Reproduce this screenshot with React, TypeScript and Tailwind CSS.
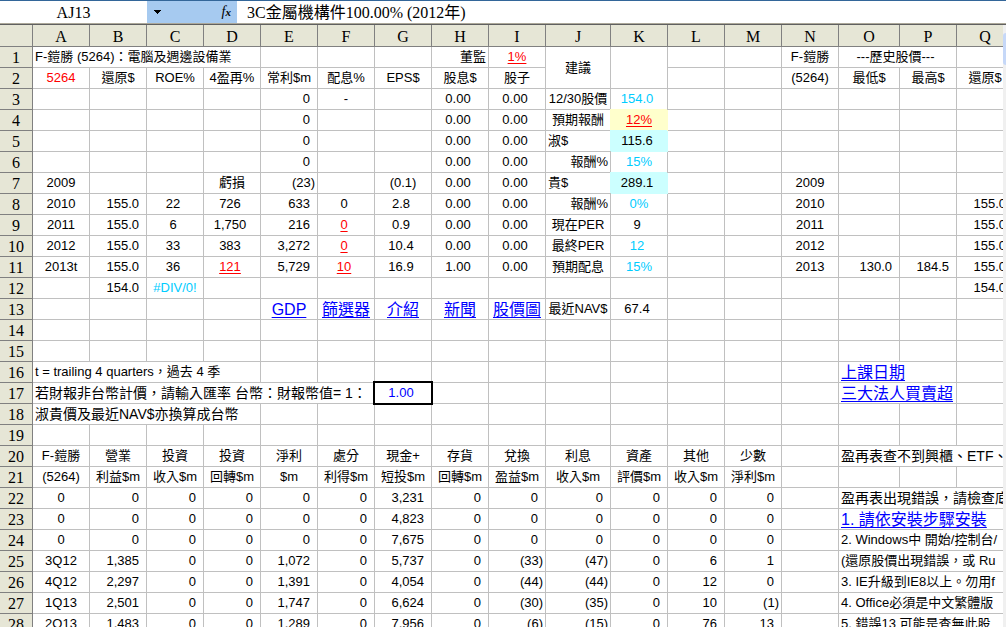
import { useState } from "react";
import clsx from "clsx";

// =============================================
// Types
// =============================================

type Cell = {
  text: string;
  align: string;
  style?: string; // colour / fill / size classes
  span?: number; // merged columns
  rows?: number; // merged rows
  link?: boolean;
  input?: boolean;
};

type Row = Record<string, Cell>;

// =============================================
// Cell helpers
// =============================================

const left = (text: string, span = 1): Cell => ({ text, align: "text-left pl-0.5", span });
const mid = (text: string, style = ""): Cell => ({ text, align: "text-center", style });
// centred number, leaves room for a closing bracket
const num = (text: string, style = ""): Cell => ({ text, align: "text-center pr-1", style });
// right aligned number, bracketed negatives sit closer to the edge
const right = (text: string): Cell => ({
  text,
  align: text.endsWith(")") ? "text-right pr-0.5" : "text-right pr-[7px]",
});
const end = (text: string): Cell => ({ text, align: "text-right pr-0.5" });
const link = (text: string): Cell => ({ text, align: "text-center", link: true });
const note = (text: string, span: number): Cell => ({ ...left(text, span), style: "text-sm/5" });

const RED = "text-[#ff0000]";
const RED_LINE = "text-[#ff0000] underline underline-offset-2";
const SKY = "text-[#00ccff]";
const YELLOW_FILL = "bg-[#ffffcc] border-[#ffffcc] shadow-[-1px_-1px_0_#ffffcc]";
const CYAN_FILL = "bg-[#ccffff] border-[#ccffff] shadow-[-1px_-1px_0_#ccffff]";

// =============================================
// Data
// =============================================

const columns = "ABCDEFGHIJKLMNOPQ".split("");

const columnWidth: Record<string, string> = {
  J: "w-[65px]",
  O: "w-[61px]",
  Q: "w-auto",
};

const dividends = { H: num("0.00"), I: num("0.00") };

// 20 - 21 headings, 22 - 28 quarters
const headings = (labels: string[]): Row =>
  Object.fromEntries(labels.map((label, i) => [columns[i], mid(label)]));

const quarter = (values: string[], comment: Cell): Row => ({
  ...Object.fromEntries(values.map((v, i) => [columns[i], i === 0 ? mid(v) : right(v)])),
  O: comment,
});

const sheet: Record<number, Row> = {
  1: {
    A: left("F-鎧勝 (5264)：電腦及週邊設備業", 4),
    H: end("董監"),
    I: mid("1%", RED_LINE),
    J: { ...mid("建議"), rows: 2 },
    K: { ...mid(""), rows: 2 },
    N: mid("F-鎧勝"),
    O: { ...num("---歷史股價---"), span: 2 },
  },
  2: {
    A: mid("5264", RED),
    B: mid("還原$"),
    C: mid("ROE%"),
    D: mid("4盈再%"),
    E: mid("常利$m"),
    F: mid("配息%"),
    G: mid("EPS$"),
    H: mid("股息$"),
    I: mid("股子"),
    N: mid("(5264)"),
    O: mid("最低$"),
    P: mid("最高$"),
    Q: mid("還原$"),
  },
  3: { E: right("0"), F: mid("-"), ...dividends, J: mid("12/30股價"), K: num("154.0", SKY) },
  4: { E: right("0"), ...dividends, J: mid("預期報酬"), K: mid("12%", clsx(RED_LINE, YELLOW_FILL)) },
  5: { E: right("0"), ...dividends, J: left("淑$"), K: num("115.6", CYAN_FILL) },
  6: { E: right("0"), ...dividends, J: end("報酬%"), K: mid("15%", SKY) },
  7: {
    A: mid("2009"),
    D: mid("虧損"),
    E: right("(23)"),
    G: mid("(0.1)"),
    ...dividends,
    J: left("貴$"),
    K: num("289.1", CYAN_FILL),
    N: mid("2009"),
  },
  8: {
    A: mid("2010"),
    B: right("155.0"),
    C: num("22"),
    D: num("726"),
    E: right("633"),
    F: num("0"),
    G: num("2.8"),
    ...dividends,
    J: end("報酬%"),
    K: mid("0%", SKY),
    N: mid("2010"),
    Q: right("155.0"),
  },
  9: {
    A: mid("2011"),
    B: right("155.0"),
    C: num("6"),
    D: num("1,750"),
    E: right("216"),
    F: num("0", RED_LINE),
    G: num("0.9"),
    ...dividends,
    J: mid("現在PER"),
    K: num("9"),
    N: mid("2011"),
    Q: right("155.0"),
  },
  10: {
    A: mid("2012"),
    B: right("155.0"),
    C: num("33"),
    D: num("383"),
    E: right("3,272"),
    F: num("0", RED_LINE),
    G: num("10.4"),
    ...dividends,
    J: mid("最終PER"),
    K: num("12", SKY),
    N: mid("2012"),
    Q: right("155.0"),
  },
  11: {
    A: mid("2013t"),
    B: right("155.0"),
    C: num("36"),
    D: num("121", RED_LINE),
    E: right("5,729"),
    F: num("10", RED_LINE),
    G: num("16.9"),
    H: num("1.00"),
    I: num("0.00"),
    J: mid("預期配息"),
    K: mid("15%", SKY),
    N: mid("2013"),
    O: right("130.0"),
    P: right("184.5"),
    Q: right("155.0"),
  },
  12: { B: right("154.0"), C: mid("#DIV/0!", SKY), Q: right("154.0") },
  13: {
    E: link("GDP"),
    F: link("篩選器"),
    G: link("介紹"),
    H: link("新聞"),
    I: link("股價圖"),
    J: mid("最近NAV$"),
    K: num("67.4"),
  },
  16: {
    A: left("t = trailing 4 quarters，過去 4 季", 4),
    O: { ...left("上課日期", 2), link: true },
  },
  17: {
    A: note("若財報非台幣計價，請輸入匯率 台幣：財報幣值= 1：", 6),
    G: { ...mid("1.00"), input: true },
    O: { ...left("三大法人買賣超", 2), link: true },
  },
  18: { A: note("淑貴價及最近NAV$亦換算成台幣", 4) },
  20: {
    ...headings(["F-鎧勝", "營業", "投資", "投資", "淨利", "處分", "現金+", "存貨", "兌換", "利息", "資產", "其他", "少數"]),
    O: note("盈再表查不到興櫃、ETF、", 3),
  },
  21: headings([
    "(5264)", "利益$m", "收入$m", "回轉$m", "$m", "利得$m", "短投$m",
    "回轉$m", "盈益$m", "收入$m", "評價$m", "收入$m", "淨利$m",
  ]),
  22: quarter(["0", "0", "0", "0", "0", "0", "3,231", "0", "0", "0", "0", "0", "0"], note("盈再表出現錯誤，請檢查底", 3)),
  23: quarter(["0", "0", "0", "0", "0", "0", "4,823", "0", "0", "0", "0", "0", "0"], { ...left("1. 請依安裝步驟安裝", 3), link: true }),
  24: quarter(["0", "0", "0", "0", "0", "0", "7,675", "0", "0", "0", "0", "0", "0"], left("2. Windows中 開始/控制台/", 3)),
  25: quarter(["3Q12", "1,385", "0", "0", "1,072", "0", "5,737", "0", "(33)", "(47)", "0", "6", "1"], left("(還原股價出現錯誤，或 Ru", 3)),
  26: quarter(["4Q12", "2,297", "0", "0", "1,391", "0", "4,054", "0", "(44)", "(44)", "0", "12", "0"], left("3. IE升級到IE8以上。勿用f", 3)),
  27: quarter(["1Q13", "2,501", "0", "0", "1,747", "0", "6,624", "0", "(30)", "(35)", "0", "10", "(1)"], left("4. Office必須是中文繁體版", 3)),
  28: quarter(["2Q13", "1,483", "0", "0", "1,289", "0", "7,956", "0", "(6)", "(15)", "0", "76", "13"], left("5. 錯誤13 可能是查無此股", 3)),
};

// =============================================
// Components
// =============================================

function FormulaBar() {
  const [formula, setFormula] = useState("3C金屬機構件100.00% (2012年)");
  return (
    <header className="flex h-6 shrink-0 border-t border-b border-t-[#336699] border-b-[#aca899] bg-white font-['Liberation_Serif','Noto_Sans_CJK_TC',serif] text-base/5">
      <input aria-label="Name Box" defaultValue="AJ13" className="w-[147px] min-w-0 pt-0.5 text-center outline-none" />
      <div className="flex w-[90px] items-center justify-between bg-[#a6caf0] pr-1.5 pl-1.5">
        <button aria-label="Open name list">
          <svg width="8" height="4" viewBox="0 0 8 4" shapeRendering="crispEdges">
            <path d="M0 0h8L4 4z" fill="#000" />
          </svg>
        </button>
        <button aria-label="Insert function" className="text-sm/5 italic">
          f<span className="text-[11px] font-bold">x</span>
        </button>
      </div>
      <input
        aria-label="Formula"
        value={formula}
        onChange={(e) => setFormula(e.target.value)}
        className="min-w-0 flex-1 pt-0.5 pl-2.5 outline-none"
      />
    </header>
  );
}

function CellContent({ cell }: { cell: Cell }) {
  if (cell.input) {
    return (
      <input
        aria-label="Exchange rate"
        defaultValue={cell.text}
        className="block h-5 w-full pr-1 text-center text-[#0000ff] outline-2 outline-black"
      />
    );
  }
  if (cell.link) {
    return (
      <a href="#" className="block text-base/[22px] text-[#0000ff] underline underline-offset-2">
        {cell.text}
      </a>
    );
  }
  return <>{cell.text}</>;
}

// Columns that a merged cell in this or the previous row already covers
function visibleColumns(row: number) {
  const out: string[] = [];
  let skip = 0;
  for (const col of columns) {
    if (skip > 0) {
      skip--;
      continue;
    }
    if ((sheet[row - 1]?.[col]?.rows ?? 1) > 1) continue;
    skip = (sheet[row]?.[col]?.span ?? 1) - 1;
    out.push(col);
  }
  return out;
}

function SheetRow({ row }: { row: number }) {
  return (
    <tr>
      <th className="border-r border-b border-[#808080] bg-[#e6e6d6] p-0 font-['Liberation_Serif',serif] text-base/[22px] font-normal">
        <div className="h-5">{row}</div>
      </th>
      {visibleColumns(row).map((col) => {
        const cell = sheet[row]?.[col];
        return (
          <td
            key={col}
            colSpan={cell?.span}
            rowSpan={cell?.rows}
            className={clsx(
              "border-r border-b p-0 align-middle whitespace-nowrap",
              cell?.style?.includes("border-") ? "" : "border-[#c0c0c0]",
              cell?.style,
            )}
          >
            <div className={clsx("h-5", !cell?.input && "overflow-hidden", !cell?.input && cell?.align)}>
              {cell && <CellContent cell={cell} />}
            </div>
          </td>
        );
      })}
    </tr>
  );
}

export default function App() {
  return (
    <div className="flex h-screen flex-col overflow-hidden bg-white font-['Liberation_Sans','Noto_Sans_CJK_TC',sans-serif] text-[13px]/5 text-black">
      <FormulaBar />
      <div className="flex min-h-0 flex-1 border-t border-[#606060]">
        <main className="min-w-0 flex-1 overflow-hidden">
          <table className="w-full min-w-[1014px] table-fixed border-separate border-spacing-0">
            <colgroup>
              <col className="w-[33px]" />
              {columns.map((col) => (
                <col key={col} className={columnWidth[col] ?? "w-[57px]"} />
              ))}
            </colgroup>
            <thead>
              <tr className="bg-[#e6e6d6] font-['Liberation_Serif',serif] text-base/[22px]">
                <th className="border-r border-b border-[#808080] p-0" />
                {columns.map((col) => (
                  <th key={col} className="border-r border-b border-[#808080] p-0 pt-px font-normal">
                    <div className="h-5">{col}</div>
                  </th>
                ))}
              </tr>
            </thead>
            <tbody>
              {Array.from({ length: 28 }, (_, i) => (
                <SheetRow key={i} row={i + 1} />
              ))}
            </tbody>
          </table>
        </main>
        <div className="w-[3px] shrink-0 bg-[#f0f0f0] pt-2">
          <div className="h-8 rounded-l-sm bg-[#c6d8f8]" />
        </div>
      </div>
    </div>
  );
}
